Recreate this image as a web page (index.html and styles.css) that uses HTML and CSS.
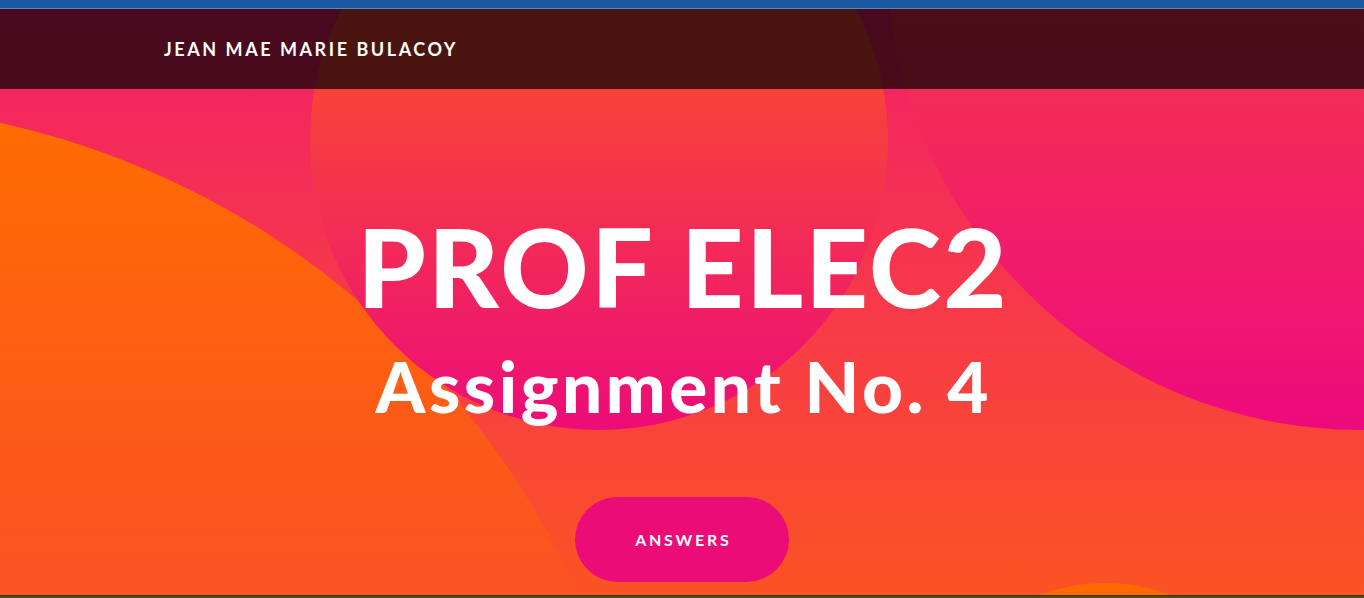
FILE: index.html
```html
<!DOCTYPE html>
<html lang="en">
<head>
<meta charset="utf-8">
<title>PROF ELEC2 - Assignment No. 4</title>
<link rel="stylesheet" href="styles.css">
</head>
<body>
  <div class="topbar"></div>
  <section class="banner">
    <div class="shape shape-orange"></div>
    <div class="shape shape-center"></div>
    <div class="shape shape-right"></div>
    <div class="shape shape-small"></div>
    <header class="site-header">
      <span class="site-title">JEAN MAE MARIE BULACOY</span>
    </header>
    <div class="hero">
      <h1 class="hero-title">PROF ELEC2</h1>
      <p class="hero-subtitle">Assignment No. 4</p>
      <a class="hero-button" href="#">ANSWERS</a>
    </div>
  </section>
  <div class="footer-strip"></div>
</body>
</html>
```

FILE: styles.css
```css
html, body {
  margin: 0;
  padding: 0;
}

body {
  width: 1364px;
  height: 598px;
  overflow: hidden;
  font-family: "Lato", "Liberation Sans", sans-serif;
  background: #4f4a22;
}

.topbar {
  height: 8px;
  background: #17589f;
  border-bottom: 1px solid #5b85bf;
}

.banner {
  position: relative;
  height: 586px;
  overflow: hidden;
  background: linear-gradient(to bottom, #f21f66 0%, #f6394a 50%, #fb5323 100%);
}

.shape {
  position: absolute;
  border-radius: 50%;
  z-index: 0;
}

.shape-orange {
  left: -1011px;
  top: 94px;
  width: 1662px;
  height: 1662px;
  background: linear-gradient(to bottom, #ff6c00 0%, #fc5a18 20%, #fb5323 29%, #fb5323 100%);
}

.shape-center {
  left: 310px;
  top: -157px;
  width: 578px;
  height: 578px;
  background: linear-gradient(to bottom, #fb5030 0%, #f7413a 43%, #f22a58 68%, #ed0c78 100%);
}

.shape-right {
  left: 887px;
  top: -527px;
  width: 948px;
  height: 948px;
  background: linear-gradient(to bottom, #fa4d35 0%, #f32b57 65%, #f11d6a 81%, #ed0a7c 100%);
}

.shape-small {
  left: 916px;
  top: 574px;
  width: 378px;
  height: 378px;
  background: #ff6a00;
}

.site-header {
  position: relative;
  z-index: 1;
  height: 80px;
  display: flex;
  align-items: center;
  padding-left: 164px;
  background: rgba(0, 0, 0, 0.7);
}

.site-title {
  color: #ffffff;
  font-size: 18px;
  font-weight: 700;
  letter-spacing: 2.55px;
  line-height: 20px;
}

.hero {
  position: relative;
  z-index: 1;
  display: flex;
  flex-direction: column;
  align-items: center;
  padding-top: 112px;
  color: #ffffff;
}

.hero-title {
  margin: 0;
  font-size: 109px;
  font-weight: 900;
  line-height: 1.2;
  letter-spacing: 2.5px;
  text-indent: 2.5px;
}

.hero-subtitle {
  margin: 11px 0 0;
  font-size: 71px;
  font-weight: 900;
  line-height: 1.2;
  letter-spacing: 3.5px;
  text-indent: 3.5px;
}

.hero-button {
  margin-top: 69px;
  width: 214px;
  height: 85px;
  display: flex;
  align-items: center;
  justify-content: center;
  border-radius: 43px;
  background: #ec0c78;
  color: #ffffff;
  text-decoration: none;
  font-size: 16px;
  font-weight: 700;
  letter-spacing: 2.7px;
  text-indent: 2.7px;
}

.footer-strip {
  height: 3px;
  background: #4f4a22;
  border-top: 1px solid #3a3416;
  box-sizing: border-box;
}
```
